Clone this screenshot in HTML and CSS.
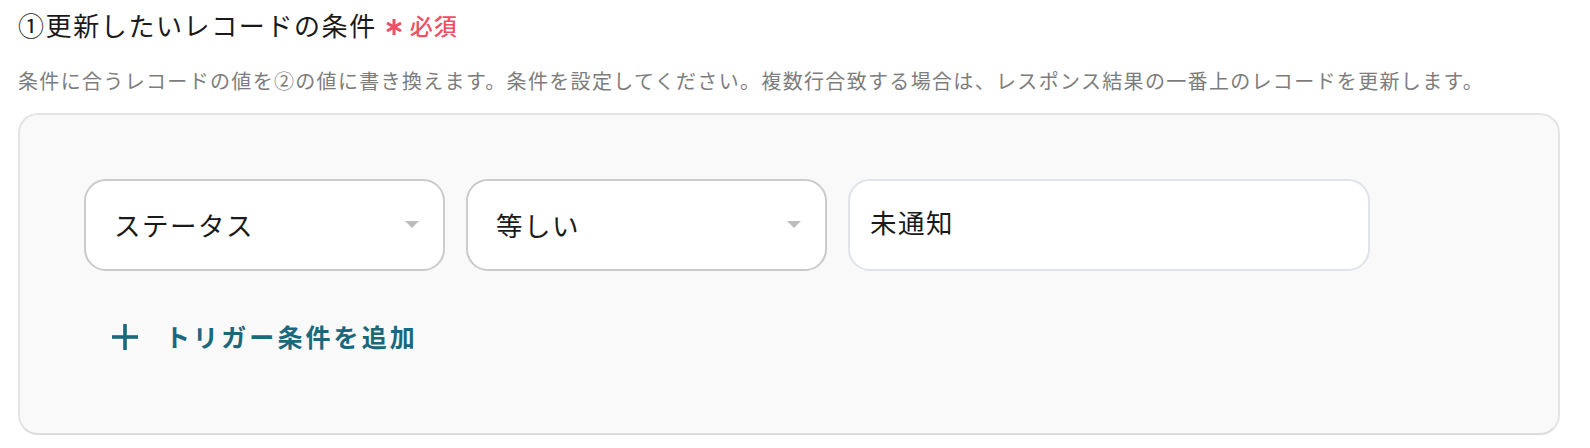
FILE: index.html
```html
<!DOCTYPE html>
<html lang="ja">
<head>
<meta charset="utf-8">
<link rel="stylesheet" href="styles.css">
</head>
<body>
<div class="page">
  <div class="title-row">
    <h2 class="title">①更新したいレコードの条件</h2>
    <span class="required">
      <svg class="asterisk" viewBox="0 0 16 16" width="16" height="16">
        <g stroke="#f04e64" stroke-width="3" stroke-linecap="butt">
          <line x1="8" y1="0" x2="8" y2="16"/>
          <line x1="1" y1="4" x2="15" y2="12"/>
          <line x1="1" y1="12" x2="15" y2="4"/>
        </g>
      </svg>
      <span class="required-text">必須</span>
    </span>
  </div>
  <p class="desc">条件に合うレコードの値を②の値に書き換えます。条件を設定してください。複数行合致する場合は、レスポンス結果の一番上のレコードを更新します。</p>
  <div class="card">
    <div class="cond-row">
      <div class="select">
        <span class="select-text">ステータス</span>
        <span class="caret"></span>
      </div>
      <div class="select">
        <span class="select-text">等しい</span>
        <span class="caret"></span>
      </div>
      <div class="input">
        <span class="input-text">未通知</span>
      </div>
    </div>
    <div class="add-row">
      <svg class="plus" viewBox="0 0 26 26" width="26" height="26">
        <g stroke="#1b687c" stroke-width="3.6">
          <line x1="13" y1="0" x2="13" y2="26"/>
          <line x1="0" y1="13" x2="26" y2="13"/>
        </g>
      </svg>
      <span class="add-text">トリガー条件を追加</span>
    </div>
  </div>
</div>
</body>
</html>
```
FILE: styles.css
```css
html, body {
  margin: 0;
  padding: 0;
  background: #ffffff;
}
.page {
  padding: 11px 30px 0 18px;
  font-family: "Noto Sans CJK JP", "Noto Sans", sans-serif;
}
.title-row {
  display: flex;
  align-items: center;
  height: 28px;
}
.title {
  margin: 0;
  font-size: 26px;
  line-height: 28px;
  font-weight: 400;
  letter-spacing: 1.6px;
  color: #1a1a1a;
}
.required {
  display: flex;
  align-items: center;
  margin-left: 9px;
  color: #f04e64;
}
.asterisk {
  display: block;
  margin-top: 4px;
}
.required-text {
  margin-left: 8px;
  font-size: 23px;
  line-height: 28px;
  font-weight: 500;
  letter-spacing: 1px;
}
.desc {
  margin: 31px 0 0 0;
  font-size: 20px;
  line-height: 22px;
  letter-spacing: 1.33px;
  color: #7d7d7d;
  white-space: nowrap;
}
.card {
  margin-top: 21px;
  height: 322px;
  box-sizing: border-box;
  border: 2px solid #e4e4e4;
  border-bottom-color: #dcdcdc;
  border-radius: 20px;
  background: #f9f9f9;
  padding: 64px 64px 0 64px;
}
.cond-row {
  display: flex;
  gap: 21px;
}
.select, .input {
  box-sizing: border-box;
  height: 92px;
  border-radius: 22px;
  background: #ffffff;
  display: flex;
  align-items: center;
}
.select {
  width: 361px;
  border: 2px solid #cbcbcb;
  padding: 0 24px 0 28px;
  justify-content: space-between;
}
.input {
  width: 522px;
  border: 2px solid #e0e3e8;
  padding: 0 20px 6px 20px;
}
.select-text, .input-text {
  font-size: 26.5px;
  line-height: 30px;
  letter-spacing: 1.5px;
  color: #1a1a1a;
}
.caret {
  width: 0;
  height: 0;
  border-left: 7.5px solid transparent;
  border-right: 7.5px solid transparent;
  border-top: 7px solid #bcbcbc;
  margin-top: -2px;
}
.add-row {
  display: flex;
  align-items: center;
  margin-top: 49px;
  padding-left: 28px;
  height: 32px;
}
.plus {
  display: block;
  margin-top: 2px;
}
.add-text {
  margin-left: 27px;
  font-size: 25px;
  line-height: 32px;
  font-weight: 700;
  letter-spacing: 3.1px;
  color: #1b687c;
}
```
